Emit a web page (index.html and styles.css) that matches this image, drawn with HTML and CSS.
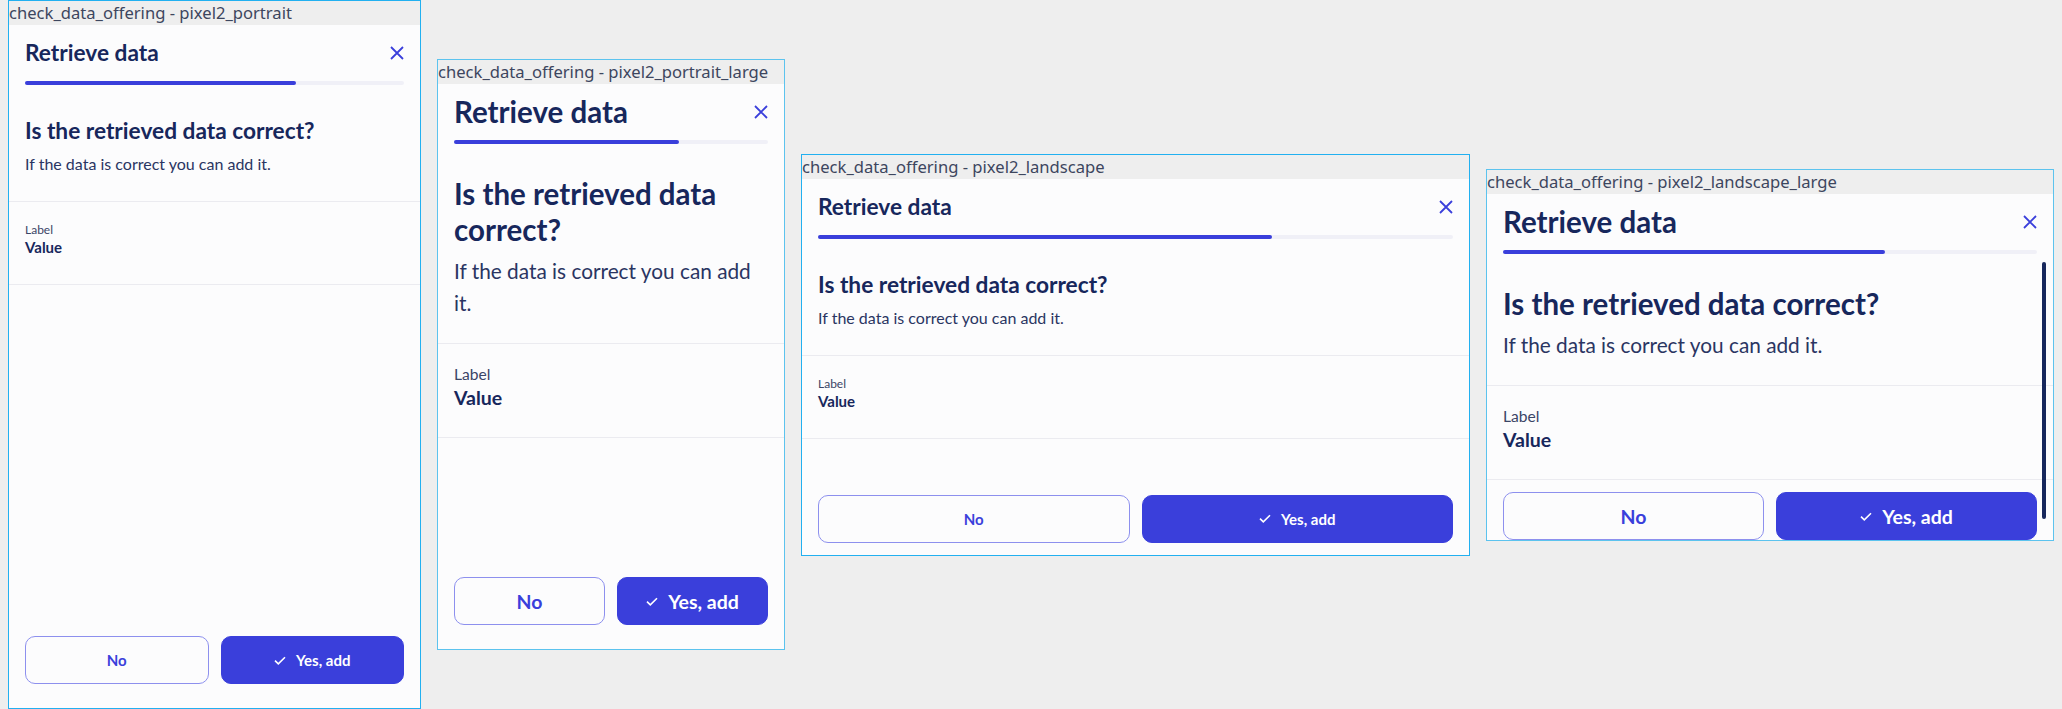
FILE: index.html
```html
<!DOCTYPE html>
<html lang="en">
<head>
<meta charset="utf-8">
<title>check_data_offering</title>
<link rel="stylesheet" href="styles.css">
</head>
<body>
<main class="stage">

  <section class="frame f-portrait">
    <div class="frame-label">check_data_offering - pixel2_portrait</div>
    <div class="screen">
      <header class="appbar">
        <h2 class="title">Retrieve data</h2>
        <svg class="close" viewBox="0 0 14 14"><path d="M1 1L13 13M13 1L1 13"/></svg>
      </header>
      <div class="progress"><div class="progress-fill"></div></div>
      <div class="scroll">
        <div class="intro">
          <h1 class="heading">Is the retrieved data correct?</h1>
          <p class="sub">If the data is correct you can add it.</p>
        </div>
        <div class="field">
          <div class="field-label">Label</div>
          <div class="field-value">Value</div>
        </div>
        <div class="spacer"></div>
        <div class="actions">
          <button class="btn btn-outline">No</button>
          <button class="btn btn-primary"><svg class="check" viewBox="0 0 12 9"><path d="M1 4.6L4.3 7.8L11 1.2"/></svg>Yes, add</button>
        </div>
      </div>
    </div>
  </section>

  <section class="frame f-portrait-large">
    <div class="frame-label">check_data_offering - pixel2_portrait_large</div>
    <div class="screen">
      <header class="appbar">
        <h2 class="title">Retrieve data</h2>
        <svg class="close" viewBox="0 0 14 14"><path d="M1 1L13 13M13 1L1 13"/></svg>
      </header>
      <div class="progress"><div class="progress-fill"></div></div>
      <div class="scroll">
        <div class="intro">
          <h1 class="heading">Is the retrieved data correct?</h1>
          <p class="sub">If the data is correct you can add it.</p>
        </div>
        <div class="field">
          <div class="field-label">Label</div>
          <div class="field-value">Value</div>
        </div>
        <div class="spacer"></div>
        <div class="actions">
          <button class="btn btn-outline">No</button>
          <button class="btn btn-primary"><svg class="check" viewBox="0 0 12 9"><path d="M1 4.6L4.3 7.8L11 1.2"/></svg>Yes, add</button>
        </div>
      </div>
    </div>
  </section>

  <section class="frame f-landscape">
    <div class="frame-label">check_data_offering - pixel2_landscape</div>
    <div class="screen">
      <header class="appbar">
        <h2 class="title">Retrieve data</h2>
        <svg class="close" viewBox="0 0 14 14"><path d="M1 1L13 13M13 1L1 13"/></svg>
      </header>
      <div class="progress"><div class="progress-fill"></div></div>
      <div class="scroll">
        <div class="intro">
          <h1 class="heading">Is the retrieved data correct?</h1>
          <p class="sub">If the data is correct you can add it.</p>
        </div>
        <div class="field">
          <div class="field-label">Label</div>
          <div class="field-value">Value</div>
        </div>
        <div class="spacer"></div>
        <div class="actions">
          <button class="btn btn-outline">No</button>
          <button class="btn btn-primary"><svg class="check" viewBox="0 0 12 9"><path d="M1 4.6L4.3 7.8L11 1.2"/></svg>Yes, add</button>
        </div>
      </div>
    </div>
  </section>

  <section class="frame f-landscape-large">
    <div class="frame-label">check_data_offering - pixel2_landscape_large</div>
    <div class="screen">
      <header class="appbar">
        <h2 class="title">Retrieve data</h2>
        <svg class="close" viewBox="0 0 14 14"><path d="M1 1L13 13M13 1L1 13"/></svg>
      </header>
      <div class="progress"><div class="progress-fill"></div></div>
      <div class="scroll">
        <div class="intro">
          <h1 class="heading">Is the retrieved data correct?</h1>
          <p class="sub">If the data is correct you can add it.</p>
        </div>
        <div class="field">
          <div class="field-label">Label</div>
          <div class="field-value">Value</div>
        </div>
        <div class="spacer"></div>
        <div class="actions">
          <button class="btn btn-outline">No</button>
          <button class="btn btn-primary"><svg class="check" viewBox="0 0 12 9"><path d="M1 4.6L4.3 7.8L11 1.2"/></svg>Yes, add</button>
        </div>
      </div>
      <div class="scrollbar"></div>
    </div>
  </section>

</main>
</body>
</html>
```

FILE: styles.css
```css
* { box-sizing: border-box; }

html, body { margin: 0; }

body {
  background: #eeeeee;
  font-family: Lato, "Noto Sans", sans-serif;
}

.stage {
  display: flex;
  align-items: center;
  gap: 16px;
  height: 709px;
  padding: 0 8px;
}

.frame {
  flex: none;
  display: flex;
  flex-direction: column;
  border: 1px solid #22b0f0;
  background: #eeeeee;
  overflow: hidden;
}

.f-portrait { width: 413px; height: 709px; --s: 1; }
.f-portrait-large { width: 348px; height: 591px; --s: 1.3; border-color: #5cc3ee; }
.f-landscape { width: 669px; height: 402px; --s: 1; }
.f-landscape-large { width: 568px; height: 372px; --s: 1.3; border-color: #5cc3ee; }

.frame-label {
  flex: none;
  height: 24px;
  font: 16.6px/24px "Noto Sans", sans-serif;
  color: #3d465e;
  white-space: nowrap;
  overflow: hidden;
}

.screen {
  flex: 1;
  min-height: 0;
  position: relative;
  display: flex;
  flex-direction: column;
  background: #fcfcfd;
}

.appbar {
  flex: none;
  height: 56px;
  display: flex;
  align-items: center;
  justify-content: space-between;
  padding: 0 16px;
}

.title {
  margin: 0;
  font-size: calc(22.7px * var(--s));
  line-height: 1.21;
  font-weight: 700;
  color: #17275c;
}

.close {
  flex: none;
  width: 14px;
  height: 14px;
  fill: none;
  stroke: #3a3fdb;
  stroke-width: 1.8;
}

.progress {
  flex: none;
  height: 4px;
  margin: 0 16px;
  border-radius: 2px;
  background: #f0f0f7;
}

.progress-fill {
  width: 71.5%;
  height: 100%;
  border-radius: 2px;
  background: #3a3fdb;
}

.scroll {
  flex: 1;
  min-height: 0;
  display: flex;
  flex-direction: column;
  overflow: hidden;
}

.scroll > * { flex-shrink: 0; }

.intro {
  padding: 32px 16px 25px;
  border-bottom: 1px solid #ebebf0;
}

.heading {
  margin: 0;
  font-size: calc(22.7px * var(--s));
  line-height: 1.21;
  font-weight: 700;
  color: #17275c;
}

.sub {
  margin: 8px 0 0;
  font-size: calc(16px * var(--s));
  line-height: 1.5;
  color: #2a3562;
}

.field {
  padding: 20px 16px 26px;
  border-bottom: 1px solid #ebebf0;
}

.field-label {
  font-size: calc(12px * var(--s));
  line-height: 1.333;
  color: #3b4566;
}

.field-value {
  font-size: calc(15px * var(--s));
  line-height: 1.333;
  font-weight: 700;
  color: #17275c;
}

.spacer { flex: 1 0 0; }

.actions {
  display: flex;
  gap: 12px;
  padding: 12px 16px 24px;
}

.f-landscape .actions,
.f-landscape-large .actions { padding-bottom: 12px; }

.btn {
  flex: 1 1 0;
  height: 48px;
  border-radius: 10px;
  font-family: Lato, "Noto Sans", sans-serif;
  font-weight: 700;
  font-size: calc(15px * var(--s));
  display: flex;
  align-items: center;
  justify-content: center;
  gap: 10px;
  padding: 0;
}

.btn-outline {
  background: transparent;
  border: 1px solid #8d90ee;
  color: #3a3fdb;
}

.btn-primary {
  background: #3a3fdb;
  border: 1px solid #3a3fdb;
  color: #ffffff;
}

.check {
  width: 12px;
  height: 9px;
  fill: none;
  stroke: #ffffff;
  stroke-width: 1.6;
}

.scrollbar {
  position: absolute;
  right: 7px;
  top: 68px;
  bottom: 21px;
  width: 4px;
  border-radius: 2px;
  background: #17275c;
}
```
